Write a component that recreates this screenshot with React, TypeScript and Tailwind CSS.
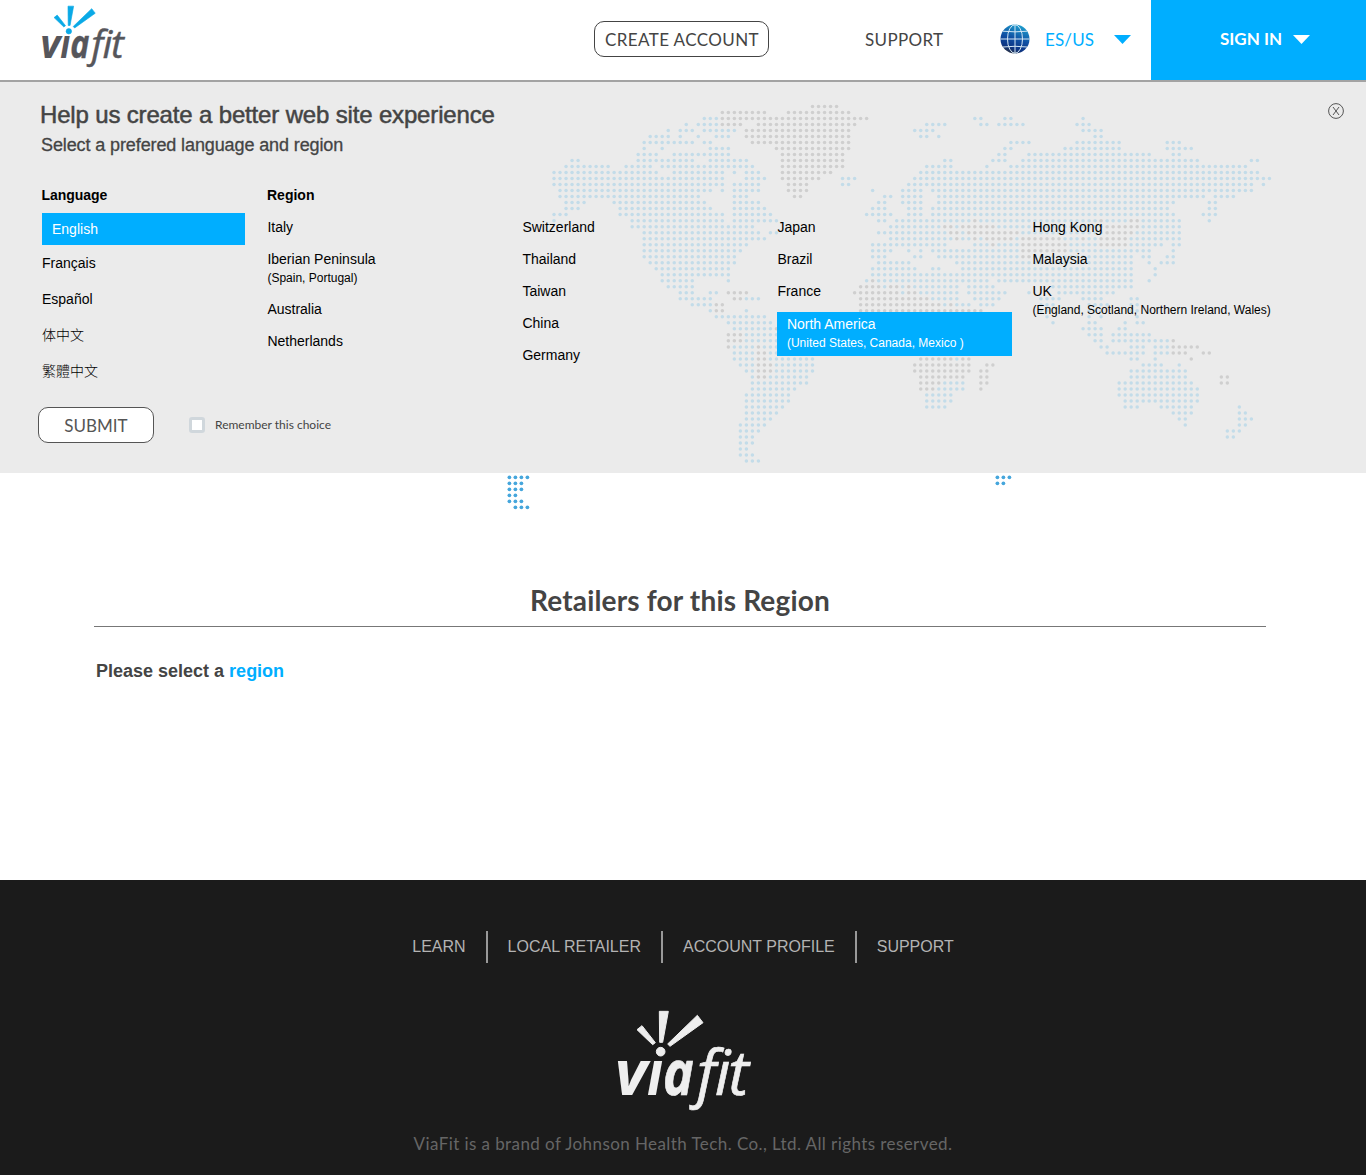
import React from "react";

type Run = [number, number];

// Dotted world map: per row, runs of covered columns in blue and in gray.
const BLUE: Run[][] = [
  [],
  [],
  [[25, 27], [70, 71], [75, 76], [88, 88]],
  [[22, 22], [24, 27], [62, 65], [71, 72], [74, 78], [87, 89]],
  [[19, 19], [21, 23], [25, 30], [60, 63], [88, 91]],
  [[16, 19], [21, 21], [24, 24], [27, 29], [61, 62], [64, 64], [90, 91]],
  [[15, 23], [25, 26], [76, 79], [87, 94], [102, 104]],
  [[15, 15], [18, 18], [26, 29], [75, 76], [85, 94], [102, 106]],
  [[14, 17], [20, 29], [74, 75], [79, 99], [103, 104]],
  [[3, 4], [14, 23], [26, 32], [65, 66], [73, 75], [78, 107], [116, 117]],
  [[2, 9], [12, 16], [18, 33], [62, 66], [72, 72], [76, 115]],
  [[0, 17], [20, 28], [30, 30], [32, 34], [61, 117]],
  [[0, 28], [32, 35], [48, 50], [60, 119]],
  [[0, 28], [30, 34], [48, 49], [59, 116], [118, 118]],
  [[1, 26], [28, 28], [30, 34], [53, 53], [58, 61], [63, 116]],
  [[1, 24], [30, 32], [55, 56], [58, 61], [64, 108], [110, 113]],
  [[2, 5], [10, 25], [30, 34], [54, 55], [58, 61], [64, 103], [109, 110]],
  [[2, 4], [11, 26], [30, 35], [53, 55], [59, 61], [63, 102], [109, 110]],
  [[0, 2], [11, 28], [30, 36], [52, 56], [59, 61], [63, 103], [108, 110]],
  [[0, 0], [13, 28], [30, 37], [54, 55], [57, 69], [71, 90], [92, 95], [98, 104], [109, 109]],
  [[13, 33], [56, 64], [67, 67], [74, 91], [98, 104]],
  [[15, 34], [36, 37], [54, 65], [68, 68], [78, 91], [97, 104]],
  [[15, 35], [56, 66], [68, 69], [71, 71], [77, 77], [85, 87], [89, 90], [96, 104]],
  [[15, 32], [53, 65], [70, 72], [74, 77], [86, 90], [96, 101], [103, 104]],
  [[15, 31], [53, 56], [59, 59], [61, 61], [63, 77], [86, 99], [103, 103]],
  [[15, 30], [53, 55], [60, 61], [64, 77], [80, 96], [98, 99], [102, 103]],
  [[16, 30], [54, 59], [67, 96], [99, 99], [101, 103]],
  [[17, 29], [53, 60], [63, 64], [68, 96], [100, 100]],
  [[18, 29], [53, 96], [100, 100]],
  [[18, 23], [29, 29], [52, 52], [54, 72], [74, 96], [99, 99]],
  [[19, 23], [55, 55], [58, 58], [60, 67], [69, 73], [83, 96]],
  [[21, 23], [26, 27], [58, 58], [61, 67], [69, 75], [79, 79], [84, 93]],
  [[21, 26], [32, 34], [63, 67], [70, 74], [81, 84], [88, 91], [96, 97]],
  [[23, 26], [65, 65], [67, 69], [71, 73], [81, 83], [89, 92], [96, 97]],
  [[26, 26], [32, 32], [81, 82], [89, 91], [96, 97]],
  [[27, 35], [82, 82], [89, 89], [91, 91], [97, 97]],
  [[29, 36], [83, 83], [89, 90], [95, 95], [97, 98]],
  [[30, 36], [88, 91], [94, 95]],
  [[32, 37], [89, 91], [93, 99]],
  [[32, 37], [90, 91], [93, 102]],
  [[30, 33], [35, 37], [91, 92], [96, 98], [100, 102]],
  [[30, 33], [36, 37], [92, 98], [100, 102]],
  [[30, 33], [36, 43], [67, 67], [96, 97], [100, 100]],
  [[31, 33], [37, 43], [98, 101], [104, 104]],
  [[32, 33], [37, 43], [96, 105]],
  [[33, 33], [36, 42], [96, 105]],
  [[33, 42], [65, 68], [94, 106]],
  [[33, 40], [64, 68], [94, 107]],
  [[32, 39], [62, 66], [94, 107]],
  [[32, 39], [62, 66], [95, 107]],
  [[32, 38], [62, 65], [95, 97], [101, 106], [114, 114]],
  [[32, 37], [103, 106], [114, 115]],
  [[32, 36], [104, 105], [114, 116]],
  [[31, 35], [105, 105], [114, 115]],
  [[31, 34], [112, 114]],
  [[31, 33], [112, 113]],
  [[31, 33]],
  [[31, 32]],
  [[31, 33]],
  [[32, 34]],
];

const GRAY: Record<number, Run[]> = {
  0: [[43, 47]],
  1: [[28, 35], [39, 49]],
  2: [[28, 52]],
  3: [[28, 31], [34, 50]],
  4: [[32, 49]],
  5: [[32, 49]],
  6: [[33, 49]],
  7: [[37, 49]],
  8: [[38, 48]],
  9: [[38, 48]],
  10: [[38, 48]],
  11: [[38, 46]],
  12: [[38, 44]],
  13: [[39, 42]],
  14: [[39, 42]],
  15: [[40, 41]],
  19: [[70, 70], [91, 91], [96, 97]],
  20: [[65, 66], [68, 73], [92, 97]],
  21: [[66, 67], [69, 77], [92, 96]],
  22: [[67, 67], [70, 70], [72, 76], [78, 84], [88, 88], [91, 95]],
  23: [[73, 73], [78, 85], [91, 95]],
  24: [[78, 85]],
  25: [[78, 79]],
  29: [[53, 53]],
  30: [[51, 54], [56, 57], [59, 59]],
  31: [[29, 32], [50, 57], [59, 60]],
  32: [[30, 31], [51, 62]],
  33: [[27, 28], [51, 64], [66, 66]],
  34: [[27, 28], [51, 71]],
  37: [[37, 37]],
  38: [[29, 31]],
  39: [[29, 31], [103, 103]],
  40: [[29, 29], [34, 34], [103, 107]],
  41: [[34, 35], [103, 105], [108, 109]],
  42: [[34, 35], [61, 66], [68, 69], [106, 106]],
  43: [[34, 36], [60, 69], [72, 73]],
  44: [[34, 36], [60, 69], [71, 72]],
  45: [[34, 35], [61, 68], [71, 72], [111, 112]],
  46: [[61, 64], [71, 72], [111, 112]],
  47: [[61, 63], [71, 71]],
};

const STEP = 6.012;

function dots(row: number, runs: Run[], fill: string) {
  return runs.flatMap(([a, b]) =>
    Array.from({ length: b - a + 1 }, (_, i) => (
      <circle key={`${fill}${row}-${a + i}`} cx={4 + STEP * (a + i)} cy={4.4 + STEP * row} r={1.75} fill={fill} />
    ))
  );
}

function WorldMap() {
  return (
    <svg className="absolute left-[550px] top-[20px] h-[364px] w-[730px]" viewBox="0 0 730 364" aria-hidden="true">
      {BLUE.map((runs, r) => dots(r, runs, "#c3dce9"))}
      {Object.entries(GRAY).map(([r, runs]) => dots(Number(r), runs, "#cfcfcf"))}
    </svg>
  );
}

const TAIL: [number, number][] = [
  [509, 477], [515, 477], [521, 477], [527, 477],
  [509, 483], [515, 483], [521, 483],
  [509, 489], [515, 489], [521, 489],
  [509, 495], [515, 495],
  [509, 501], [515, 501], [521, 501],
  [515, 507], [521, 507], [527, 507],
  [997, 477], [1003, 477], [1009, 477],
  [997, 483], [1003, 483],
];

function MapTail() {
  return (
    <svg className="block h-[40px] w-full" viewBox="0 473 1366 40" aria-hidden="true">
      {TAIL.map(([x, y]) => (
        <circle key={`${x}-${y}`} cx={x + 0.4} cy={y + 0.3} r={1.85} fill="#45a6dc" />
      ))}
    </svg>
  );
}

function Logo({ className, text, accent }: { className: string; text: string; accent: string }) {
  return (
    <svg className={className} viewBox="0 0 510 360" role="img" aria-label="viafit">
      <g fill={accent} stroke={accent} strokeWidth="3" strokeLinejoin="round">
        <path d="M111 89 L126 77 L166 128 L158 134 Z" />
        <path d="M178 34 L205 34 L188 127 L179 127 Z" />
        <path d="M292 46 L309 68 L210 139 L203 132 Z" />
        <circle cx="182" cy="155" r="13" />
      </g>
      <text y="284" fill={text} stroke={text} fontFamily="'Open Sans', sans-serif" fontStyle="italic" fontSize="187">
        <tspan x="44" fontWeight="700" strokeWidth="0" textLength="97" lengthAdjust="spacingAndGlyphs">v</tspan>
        <tspan x="141" fontWeight="700" strokeWidth="0" textLength="48" lengthAdjust="spacingAndGlyphs">ı</tspan>
        <tspan x="189" fontWeight="700" strokeWidth="2" textLength="92" lengthAdjust="spacingAndGlyphs">a</tspan>
        <tspan x="290" fontWeight="500" strokeWidth="2">f</tspan>
        <tspan x="344" fontWeight="500" strokeWidth="2">i</tspan>
        <tspan x="385" fontWeight="500" strokeWidth="2">t</tspan>
      </text>
    </svg>
  );
}

function Globe() {
  return (
    <svg className="h-[30px] w-[30px]" viewBox="0 0 30 30" aria-hidden="true">
      <defs>
        <linearGradient id="globe" x1="0.7" y1="0" x2="0.35" y2="1">
          <stop offset="0" stopColor="#1fa3d0" />
          <stop offset="0.5" stopColor="#0f4fa3" />
          <stop offset="0.8" stopColor="#0c3585" />
          <stop offset="1" stopColor="#2b3345" />
        </linearGradient>
      </defs>
      <circle cx="15" cy="15" r="14.5" fill="url(#globe)" />
      <g fill="none" stroke="#d3e6f4" strokeWidth="1">
        <path d="M15 .5V29.500M.5 15H29.500M3 7.200Q15 8.500 27 7.200M3 23Q15 21.500 27 23" />
        <ellipse cx="15" cy="15" rx="7.500" ry="14.300" />
      </g>
    </svg>
  );
}

function Caret({ className }: { className: string }) {
  return (
    <svg className={className} viewBox="0 0 17 9" aria-hidden="true">
      <path d="M0 0H17L8.500 9Z" fill="currentColor" />
    </svg>
  );
}

type Region = { name: string; note?: string; active?: boolean };

const REGIONS: Region[][] = [
  [{ name: "Italy" }, { name: "Iberian Peninsula", note: "(Spain, Portugal)" }, { name: "Australia" }, { name: "Netherlands" }],
  [{ name: "Switzerland" }, { name: "Thailand" }, { name: "Taiwan" }, { name: "China" }, { name: "Germany" }],
  [{ name: "Japan" }, { name: "Brazil" }, { name: "France" }, { name: "North America", note: "(United States, Canada, Mexico )", active: true }],
  [{ name: "Hong Kong" }, { name: "Malaysia" }, { name: "UK", note: "(England, Scotland, Northern Ireland, Wales)" }],
];

function RegionItem({ name, note, active }: Region) {
  return (
    <li className={active ? "-mt-[1.5px] h-11 w-[235px] bg-[#00aeff] pl-[9.500px] pt-[3px] text-white" : "mb-[13px]"}>
      <div className="leading-[19px]">{name}</div>
      {note && <div className="whitespace-nowrap text-[12px] leading-[18px]">{note}</div>}
    </li>
  );
}

export default function App() {
  return (
    <div className="flex h-[1175px] w-[1366px] flex-col overflow-hidden bg-white font-['Liberation_Sans',Arial,sans-serif] text-[#444]">
      <header className="flex h-20 shrink-0 font-[Lato,sans-serif] text-[18px]">
        <Logo className="-mt-px ml-[31px] h-[75px] w-[106px]" text="#56565b" accent="#0aa9e6" />
        <button className="ml-[457px] mt-[21px] flex h-9 w-[175px] items-center justify-center whitespace-nowrap rounded-[10px] border border-[#444] pl-px pt-px text-[17px] tracking-[0.4px]">
          CREATE ACCOUNT
        </button>
        <a className="ml-[96px] mt-[21px] w-[79px] whitespace-nowrap pt-px text-[17px] leading-9 tracking-[0.35px]">SUPPORT</a>
        <div className="ml-[56px] mt-[21px] flex h-9 w-[151px] items-center text-[#00aeff]">
          <Globe />
          <span className="ml-[15px] w-[50px] pt-px text-[17px] tracking-[0.15px]">ES/US</span>
          <Caret className="ml-[19px] h-[9px] w-[17px]" />
        </div>
        <button className="flex h-20 flex-1 items-center bg-[#00aeff] pl-[68px] pb-0.5 text-[17px] font-bold text-white">
          <span className="w-[64px] whitespace-nowrap">SIGN IN</span>
          <Caret className="ml-[10px] h-[9px] w-[17px]" />
        </button>
      </header>

      <section className="relative h-[393px] shrink-0 border-t-2 border-[#a3a3a3] bg-[#ebebeb]">
        <WorldMap />
        <div className="relative flex justify-between pl-[41px] pr-[22px] pt-[18px]">
          <div>
            <h1 className="-ml-px whitespace-nowrap text-[24px] leading-[30px] tracking-[-0.16px] [-webkit-text-stroke:0.5px_#444]">Help us create a better web site experience</h1>
            <p className="whitespace-nowrap text-[18px] leading-[30px] tracking-[-0.11px] [-webkit-text-stroke:0.3px_#444]">Select a prefered language and region</p>
          </div>
          <button aria-label="Close" className="mt-[3px] h-4 w-4">
            <svg viewBox="0 0 16 16" fill="none" stroke="#555" className="h-4 w-4">
              <circle cx="8" cy="8" r="7.400" />
              <path d="M5 4L11 12M11 4L5 12" />
            </svg>
          </button>
        </div>

        <div className="relative mt-[25px] flex pl-[42px] text-[14px] text-black">
          <div className="w-[225px]">
            <h2 className="-ml-[0.5px] font-bold leading-5 tracking-[-0.05px]">Language</h2>
            <ul className="mt-[7.500px]">
              <li className="h-8 w-[202.500px] bg-[#00aeff] pl-[10px] leading-8 text-white">English</li>
              <li className="h-9 leading-9">Français</li>
              <li className="h-9 leading-9">Español</li>
              <li className="h-9 font-['Noto_Sans_CJK_SC',sans-serif] font-light leading-[34px]">体中文</li>
              <li className="h-9 font-['Noto_Sans_CJK_TC',sans-serif] font-light leading-[34px]">繁體中文</li>
            </ul>
          </div>
          <div>
            <h2 className="font-bold leading-5">Region</h2>
            <div className="mt-[12.500px] grid grid-cols-[255px_255px_255px_255px] pl-[0.4px]">
              {REGIONS.map((col, i) => (
                <ul key={i}>
                  {col.map((r) => (
                    <RegionItem key={r.name} {...r} />
                  ))}
                </ul>
              ))}
            </div>
          </div>
        </div>

        <form className="relative mt-[18.500px] flex items-center pl-[38px] font-[Lato,sans-serif]">
          <button type="button" className="h-9 w-[116px] rounded-[10px] border border-[#555] bg-white pt-px text-[17px] text-[#555]">
            SUBMIT
          </button>
          <span className="ml-[35px] h-4 w-4 rounded-[3px] border-[3px] border-[#d0d7dc] bg-white" />
          <span className="ml-[10px] whitespace-nowrap text-[12px]">Remember this choice</span>
        </form>
      </section>

      <main className="h-[407px] shrink-0">
        <MapTail />
        <h2 className="ml-[94px] mr-[100px] mt-[68px] h-[46px] border-b border-[#777] text-center font-[Lato,sans-serif] text-[28px] font-bold leading-[38px] tracking-[0.17px]">
          Retailers for this Region
        </h2>
        <p className="ml-[96px] mt-[32px] text-[18px] font-bold leading-6">
          Please select a <a className="text-[#00aeff]">region</a>
        </p>
      </main>

      <footer className="flex flex-1 flex-col items-center bg-[#1b1b1b]">
        <nav className="mt-[51px] flex h-8 items-center whitespace-nowrap text-[16px] text-[#b3b3b3]">
          <a>LEARN</a>
          <span className="mx-5 h-8 w-0.5 bg-[#999]" />
          <a>LOCAL RETAILER</a>
          <span className="mx-5 h-8 w-0.5 bg-[#999]" />
          <a>ACCOUNT PROFILE</a>
          <span className="mx-5 h-8 w-0.5 bg-[#999]" />
          <a>SUPPORT</a>
        </nav>
        <Logo className="mr-[-4px] mt-[37px] h-[120px] w-[170px]" text="#eeeeee" accent="#eeeeee" />
        <p className="mt-[12px] whitespace-nowrap font-[Lato,sans-serif] text-[17px] leading-6 tracking-[0.42px] text-[#666]">
          ViaFit is a brand of Johnson Health Tech. Co., Ltd. All rights reserved.
        </p>
      </footer>
    </div>
  );
}
